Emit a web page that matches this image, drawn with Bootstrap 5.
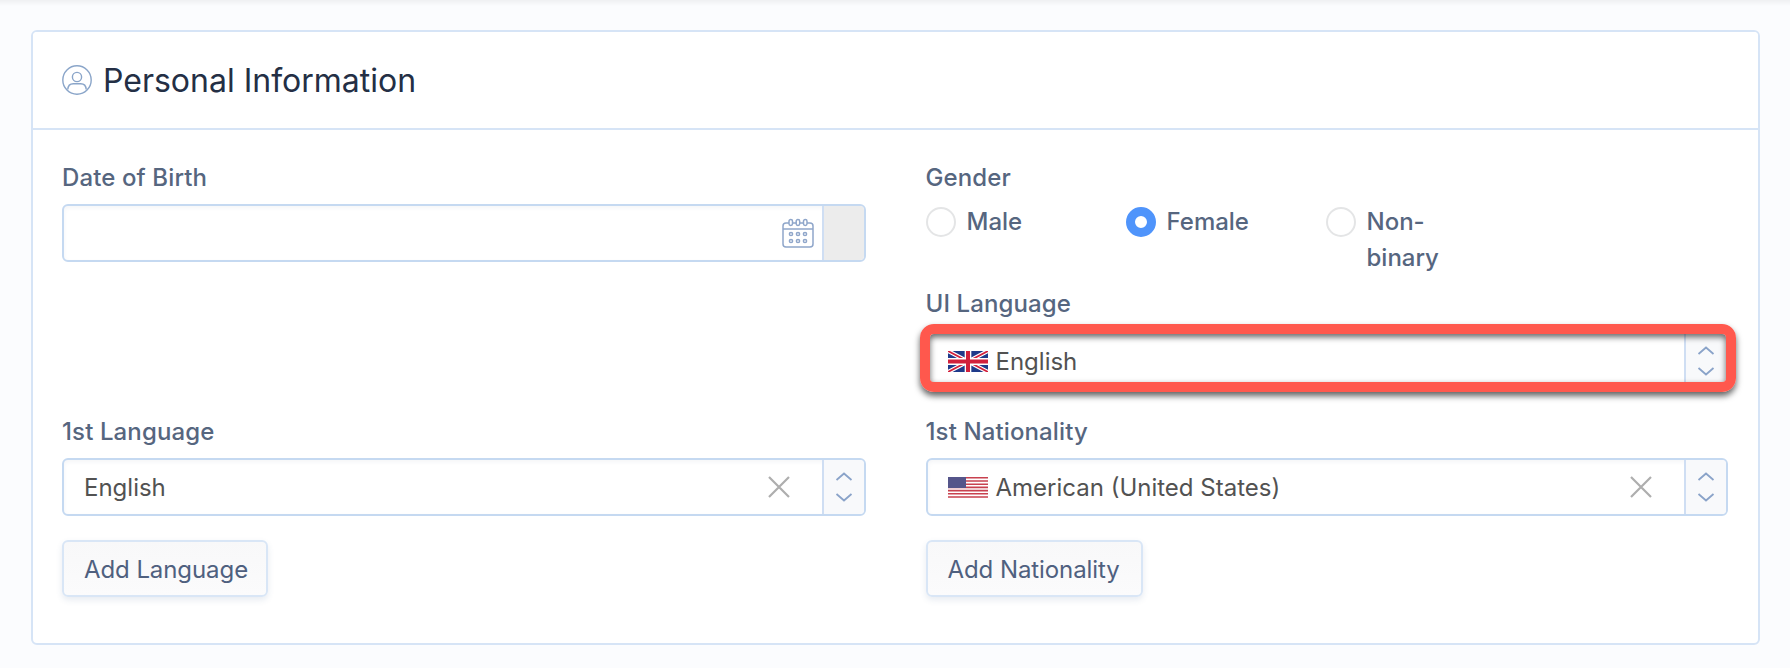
<!doctype html>
<html lang="en">
<head>
<meta charset="utf-8">
<title>Personal Information</title>
<link href="https://cdn.jsdelivr.net/npm/bootstrap@5.3.0/dist/css/bootstrap.min.css" rel="stylesheet">
<style>
html,body{height:668px;overflow:hidden}
body{background:#fbfcfe;font-family:Inter,"Liberation Sans",sans-serif;font-size:24px;color:#55647f}
.top-fade{height:6px;background:linear-gradient(#eff0f2,#fbfcfe)}
.page-wrap{padding:24px 30px 0 31px}
.info-card{border:2px solid #d6e4f6;border-radius:6px;background:#fff;height:615px}
.info-head{background:#fff;border-bottom:2px solid #d6e4f6;height:98px;padding:0 29px;display:flex;align-items:center;gap:11px;border-radius:4px 4px 0 0!important}
.info-head h2{font-size:32px;font-weight:400;color:#242f45;margin:0;line-height:36px;padding-top:2px}
.info-body{padding:33px 29px 0}
.info-row{--bs-gutter-x:60px;--bs-gutter-y:0}
.col-right{padding-right:31px}
.fld-label{font-size:24px;font-weight:500;line-height:30px;margin:0 0 11px;color:#56667f;display:block;white-space:nowrap;letter-spacing:.12px}
.ui-label{margin-bottom:13px}
.fld-box{height:58px;border:2px solid #c5d9f1;border-radius:6px;background:#fff;box-shadow:inset 0 2px 4px rgba(30,50,90,.05);display:flex;align-items:stretch;overflow:hidden;color:#525252}
.fld-main{flex:1 1 auto;display:flex;align-items:center;padding-left:20px;min-width:0}
.fld-text{padding-top:2px}
.fld-flag{width:40px;height:21px;margin-right:8px;flex:none}
.fld-clear{width:22px;height:22px;margin-right:32px;flex:none}
.fld-cal{width:32px;height:30px;margin-right:8px;flex:none}
.fld-add{width:42px;flex:none;border-left:2px solid #cfdef3;background:#ececec}
.fld-spin{width:42px;flex:none;border-left:2px solid #cfdef3;background:#f8f9fb;display:flex;align-items:center;justify-content:center}
.fld-spin svg{width:18px;height:30px}
.gap-field{margin-bottom:30px}
.gap-ui{margin-bottom:27px}
.gap-radio{margin-bottom:13px}
.radio-line{display:flex;gap:50px;align-items:flex-start}
.radio-opt{width:150px;display:flex;gap:11px;line-height:36px;font-weight:500;color:#56667f}
.radio-dot{width:30px;height:30px;border-radius:50%;border:2px solid #e4e5e6;background:#fff;flex:none;margin-top:3px}
.radio-dot.on{border:9px solid #4f94fb}
.add-btn{height:57px;padding:2px 18px 0 20px;font-size:24px;letter-spacing:-.08px;color:#4f607f;background:linear-gradient(#f8f8f9,#fbfbfc);border:2px solid #d9e6f6;border-radius:6px;box-shadow:0 3px 6px rgba(60,90,140,.12);margin-top:-6px;display:block}
.wide-btn{padding-right:21px}
.mark-wrap{position:relative}
.red-ring{position:absolute;left:-6px;right:-8px;top:-8px;height:68px;border:10px solid #ff584d;border-radius:14px;box-shadow:0 4px 6px rgba(0,0,0,.62),inset 0 3px 6px rgba(0,0,0,.6);pointer-events:none}
</style>
</head>
<body>
<div class="top-fade"></div>
<div class="page-wrap">
<div class="card info-card">
  <div class="card-header info-head">
    <svg width="30" height="30" viewBox="0 0 30 30" fill="none" stroke="#8aa5c9" stroke-width="1.4"><circle cx="15" cy="15" r="14.2"/><circle cx="15" cy="12" r="4.600"/><path d="M5.800 24.500c.2-4 2.800-5.800 5.500-5.800h7.400c2.700 0 5.300 1.800 5.500 5.800"/></svg>
    <h2>Personal Information</h2>
  </div>
  <div class="card-body info-body">
    <div class="row info-row">
      <div class="col-6">
        <label class="fld-label">Date of Birth</label>
        <div class="fld-box">
          <div class="fld-main justify-content-end">
            <svg class="fld-cal" viewBox="0 0 32 30" fill="none" stroke="#8fa6ca" stroke-width="1.5"><rect x="1" y="5" width="30" height="24" rx="3"/><path d="M1 11h30" /><rect x="7" y="1.500" width="3.500" height="6" rx="1.700" fill="#fff"/><rect x="14.200" y="1.500" width="3.500" height="6" rx="1.700" fill="#fff"/><rect x="21.500" y="1.500" width="3.500" height="6" rx="1.700" fill="#fff"/><circle cx="9" cy="16" r="1.600"/><circle cx="16" cy="16" r="1.600"/><circle cx="23" cy="16" r="1.600"/><circle cx="9" cy="23" r="1.600"/><circle cx="16" cy="23" r="1.600"/><circle cx="23" cy="23" r="1.600"/></svg>
          </div>
          <div class="fld-add"></div>
        </div>
      </div>
      <div class="col-6 col-right">
        <label class="fld-label">Gender</label>
        <div class="radio-line gap-radio">
          <div class="radio-opt"><span class="radio-dot"></span><span>Male</span></div>
          <div class="radio-opt"><span class="radio-dot on"></span><span>Female</span></div>
          <div class="radio-opt"><span class="radio-dot"></span><span>Non-binary</span></div>
        </div>
        <label class="fld-label ui-label">UI Language</label>
        <div class="mark-wrap gap-ui">
          <div class="fld-box">
            <div class="fld-main">
              <svg class="fld-flag" viewBox="0 0 60 30" preserveAspectRatio="none"><rect width="60" height="30" fill="#1f3a8a"/><path d="M0 0l60 30M60 0L0 30" stroke="#fff" stroke-width="6"/><path d="M0 0l60 30M60 0L0 30" stroke="#d2203c" stroke-width="2.500"/><path d="M30 0v30M0 15h60" stroke="#fff" stroke-width="10"/><path d="M30 0v30M0 15h60" stroke="#d2203c" stroke-width="6"/></svg>
              <span class="fld-text">English</span>
            </div>
            <div class="fld-spin"><svg viewBox="0 0 18 30" fill="none" stroke="#8aa3c9" stroke-width="1.800"><path d="M1.500 8l7.500-6.500L16.500 8M1.500 22l7.500 6.500 7.500-6.500"/></svg></div>
          </div>
          <div class="red-ring"></div>
        </div>
      </div>
    </div>
    <div class="row info-row">
      <div class="col-6">
        <label class="fld-label">1st Language</label>
        <div class="fld-box gap-field">
          <div class="fld-main"><span class="flex-grow-1 fld-text">English</span>
            <svg class="fld-clear" viewBox="0 0 22 22" stroke="#aeaeae" stroke-width="2.200"><path d="M1 1l20 20M21 1L1 21"/></svg>
          </div>
          <div class="fld-spin"><svg viewBox="0 0 18 30" fill="none" stroke="#8aa3c9" stroke-width="1.800"><path d="M1.500 8l7.500-6.500L16.500 8M1.500 22l7.500 6.500 7.500-6.500"/></svg></div>
        </div>
        <button type="button" class="btn add-btn">Add Language</button>
      </div>
      <div class="col-6 col-right">
        <label class="fld-label">1st Nationality</label>
        <div class="fld-box gap-field">
          <div class="fld-main">
            <svg class="fld-flag" viewBox="0 0 40 21" preserveAspectRatio="none"><rect width="40" height="21" fill="#fff"/><path d="M0 .8h40M0 4h40M0 7.200h40M0 10.400h40M0 13.600h40M0 16.800h40M0 20h40" stroke="#c8414f" stroke-width="1.600"/><rect width="18" height="11" fill="#55558a"/></svg>
            <span class="flex-grow-1 fld-text">American (United States)</span>
            <svg class="fld-clear" viewBox="0 0 22 22" stroke="#aeaeae" stroke-width="2.200"><path d="M1 1l20 20M21 1L1 21"/></svg>
          </div>
          <div class="fld-spin"><svg viewBox="0 0 18 30" fill="none" stroke="#8aa3c9" stroke-width="1.800"><path d="M1.500 8l7.500-6.500L16.500 8M1.500 22l7.500 6.500 7.500-6.500"/></svg></div>
        </div>
        <button type="button" class="btn add-btn wide-btn">Add Nationality</button>
      </div>
    </div>
  </div>
</div>
</div>
<script src="https://cdn.jsdelivr.net/npm/bootstrap@5.3.0/dist/js/bootstrap.bundle.min.js"></script>
</body>
</html>
